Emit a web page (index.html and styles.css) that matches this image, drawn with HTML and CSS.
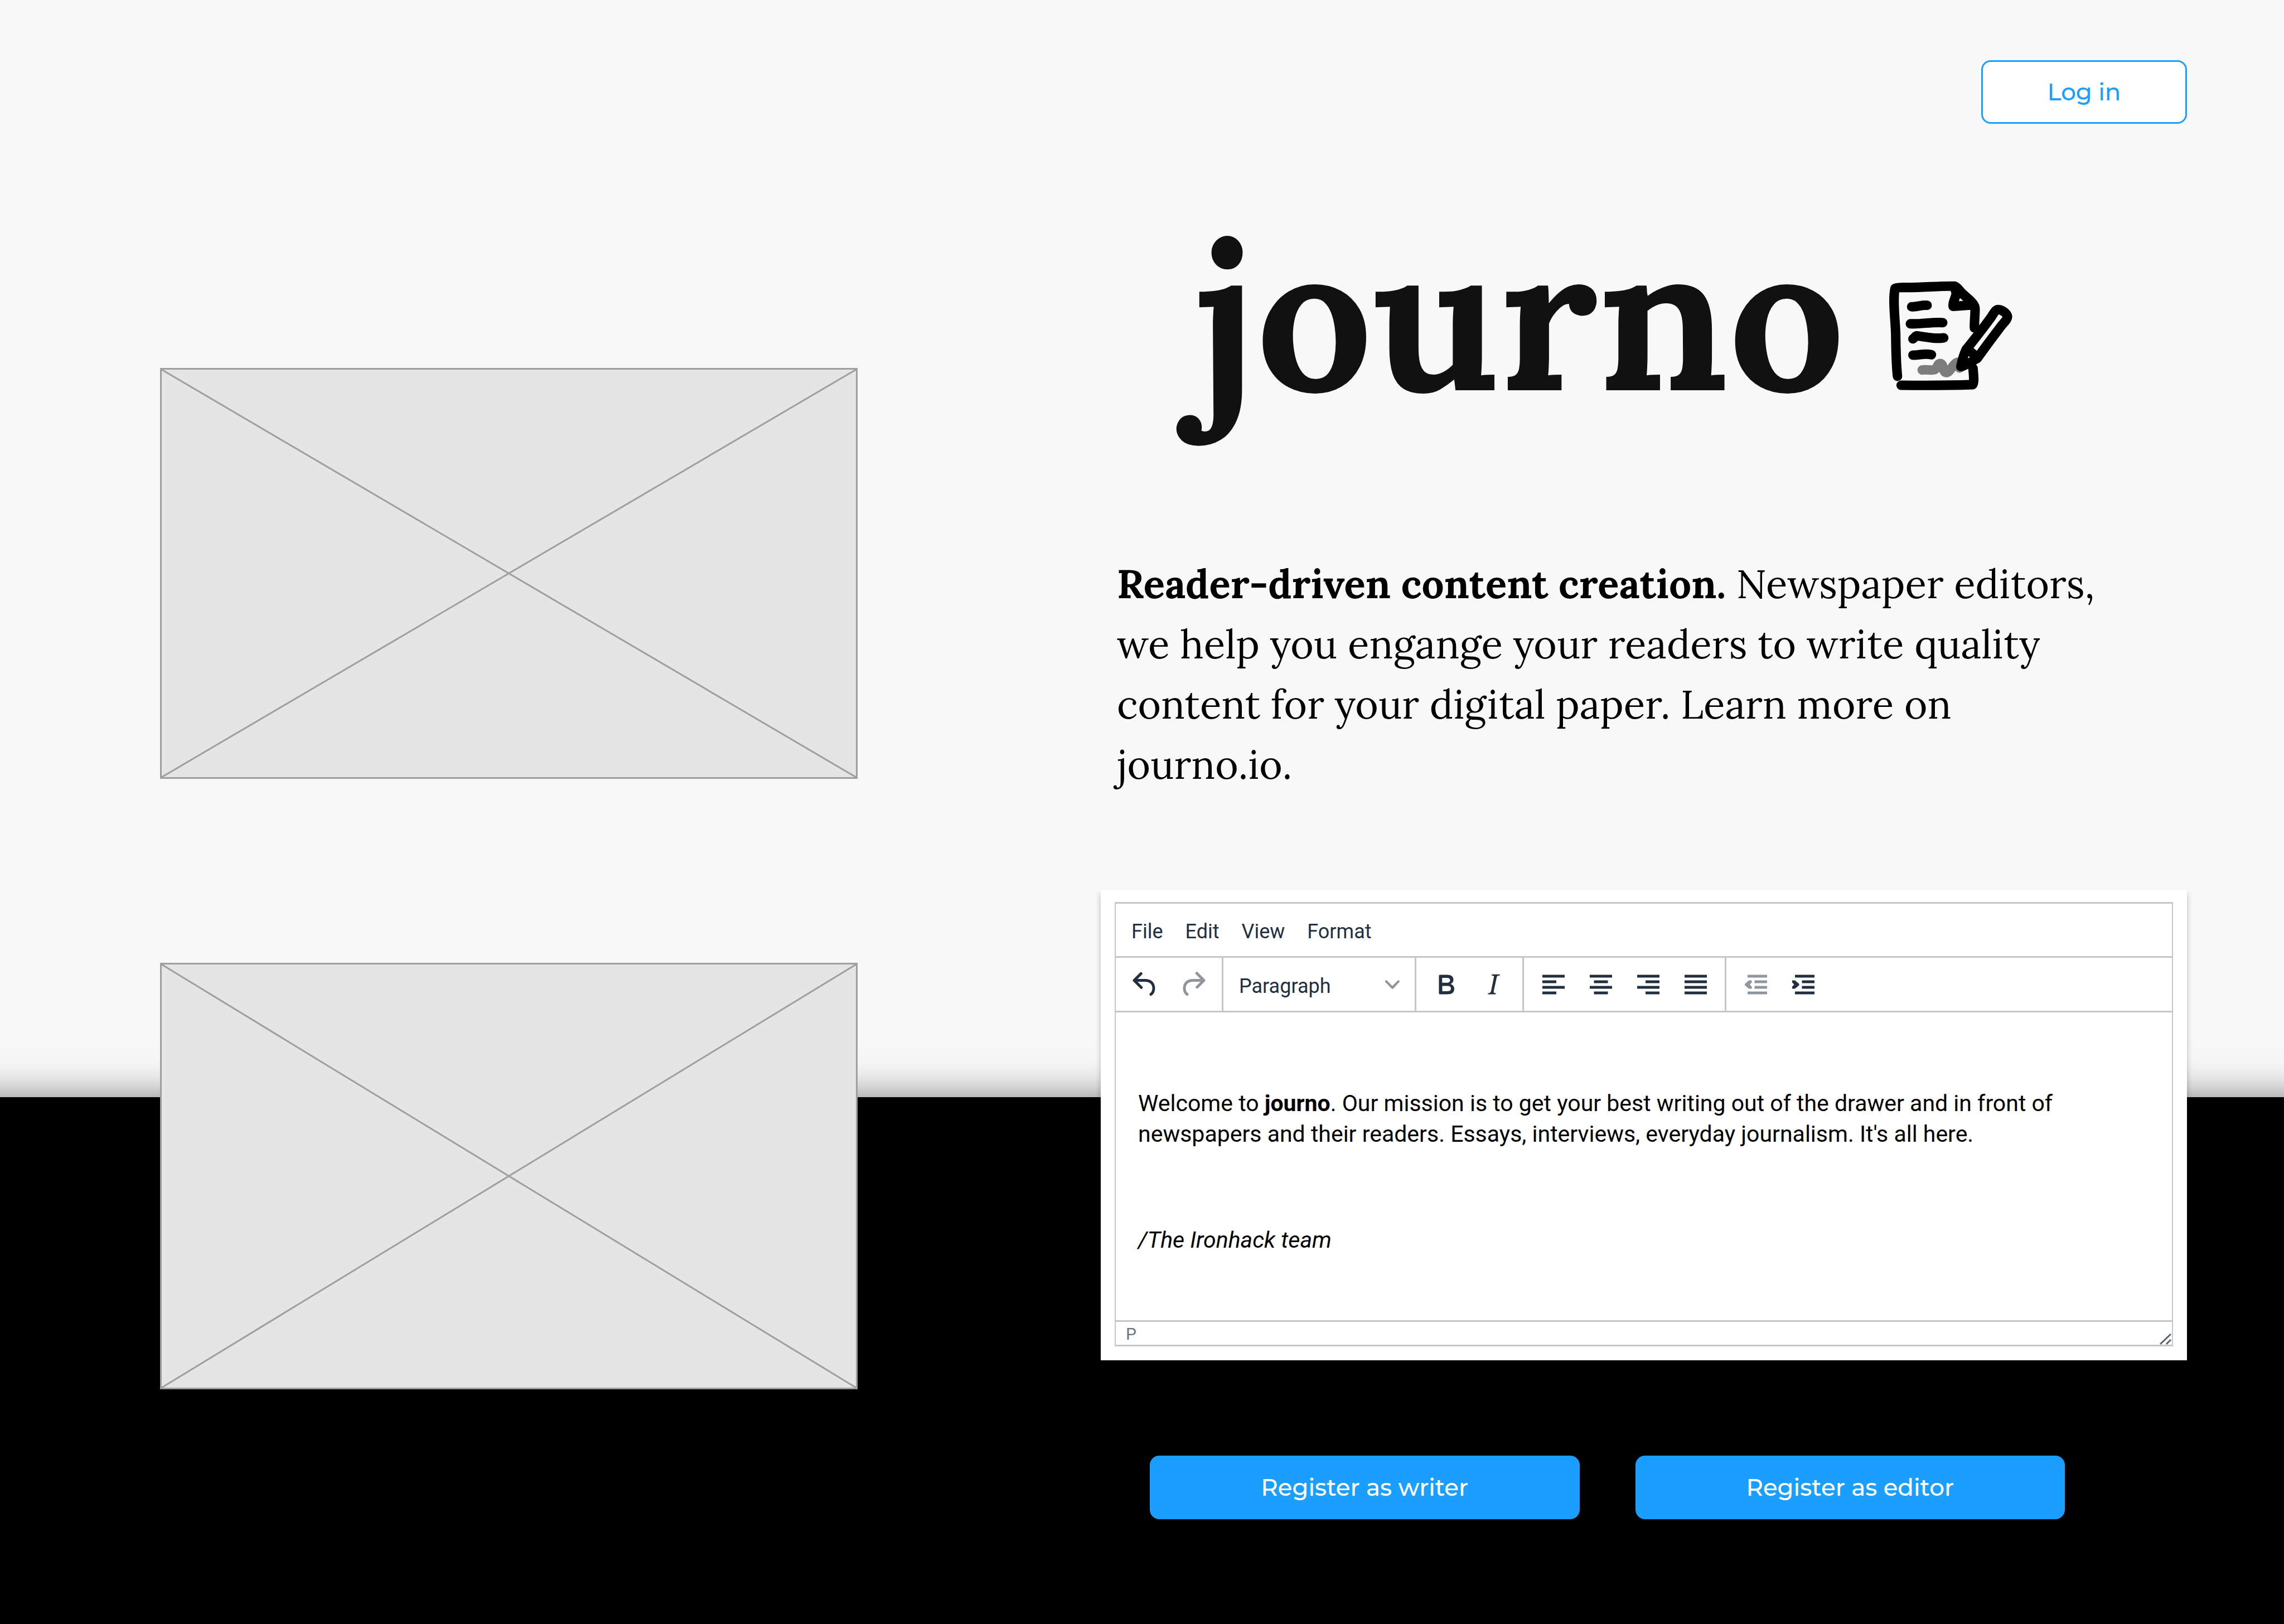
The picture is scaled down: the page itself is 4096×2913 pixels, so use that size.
FILE: index.html
```html
<!DOCTYPE html>
<html lang="en">
<head>
<meta charset="utf-8">
<title>journo</title>
<link rel="stylesheet" href="styles.css">
</head>
<body>
<div class="backdrop"></div>
<main class="page">
  <section class="gallery" aria-label="Pictures">
    <div class="placeholder placeholder-first">
      <svg viewBox="0 0 100 100" preserveAspectRatio="none"><path d="M0 0L100 100M100 0L0 100" vector-effect="non-scaling-stroke"/></svg>
    </div>
    <div class="placeholder placeholder-second">
      <svg viewBox="0 0 100 100" preserveAspectRatio="none"><path d="M0 0L100 100M100 0L0 100" vector-effect="non-scaling-stroke"/></svg>
    </div>
  </section>

  <section class="intro">
    <header class="top">
      <button class="btn btn-outline" type="button">Log in</button>
    </header>

    <div class="brand">
      <h1 class="wordmark">journo</h1>
      <svg class="brand-icon" viewBox="300 230 990 870" aria-hidden="true">
        <g fill="none" stroke-width="75" stroke-linecap="round" stroke-linejoin="round">
          <path stroke="#7d7d7d" d="M569 941C600 935 650 946 668 938C690 928 686 890 711 890C742 890 728 961 760 961C792 961 815 880 856 879L864 925"/>
          <g stroke="#000">
            <path d="M374 990C362 880 362 780 360 650C356 540 335 380 355 297C375 290 400 289 425 289C560 292 700 276 825 279C850 285 862 318 892 343C940 386 984 420 986 452C988 500 980 550 981 608"/>
            <path d="M832 318C850 350 806 400 813 438L950 428"/>
            <path d="M855 310L950 395"/>
            <path d="M486 442C530 442 570 425 608 430"/>
            <path d="M476 576C560 580 650 560 731 567"/>
            <path d="M496 695C512 684 516 671 528 671C600 680 660 698 739 687"/>
            <path d="M496 823C550 826 580 806 642 820"/>
            <path d="M403 1061C600 1064 800 1062 968 1056C982 1040 974 980 970 927"/>
            <path d="M874 914C885 860 900 810 916 780C980 700 1050 610 1112 526C1130 500 1145 464 1168 464C1195 464 1236 490 1242 518C1244 540 1215 565 1195 590C1130 675 1060 770 1004 848C970 868 920 900 879 914Z"/>
            <path d="M916 780C955 790 982 820 1004 848"/>
          </g>
        </g>
      </svg>
    </div>

    <p class="pitch"><strong>Reader-driven content creation.</strong> Newspaper editors,<br>we help you engange your readers to write quality<br>content for your digital paper. Learn more on<br>journo.io.</p>

    <div class="card">
      <div class="editor">
        <div class="menubar">
          <button type="button">File</button>
          <button type="button">Edit</button>
          <button type="button">View</button>
          <button type="button">Format</button>
        </div>
        <div class="toolbar">
          <div class="group">
            <button type="button" aria-label="Undo"><svg viewBox="0 0 24 24"><path d="M6.400 8H12c3.700 0 6.200 2 6.800 5.100.6 2.700-.4 5.600-2.300 6.800a1 1 0 0 1-1-1.800c1.100-.6 1.800-2.700 1.400-4.600-.5-2.100-2.100-3.500-4.900-3.500H6.400l3.300 3.300a1 1 0 1 1-1.400 1.400l-5-5a1 1 0 0 1 0-1.400l5-5a1 1 0 0 1 1.400 1.400L6.400 8z"/></svg></button>
            <button type="button" aria-label="Redo" disabled><svg viewBox="0 0 24 24"><path d="M17.600 10H12c-2.800 0-4.400 1.400-4.900 3.500-.4 2 .3 4 1.400 4.600a1 1 0 1 1-1 1.800c-2-1.200-2.900-4.100-2.300-6.800.6-3 3-5.100 6.800-5.100h5.600l-3.300-3.300a1 1 0 1 1 1.400-1.400l5 5a1 1 0 0 1 0 1.400l-5 5a1 1 0 0 1-1.400-1.400l3.300-3.300z"/></svg></button>
          </div>
          <label class="format-picker">
            <select aria-label="Block format"><option>Paragraph</option></select>
            <svg viewBox="0 0 10 10"><path d="M8.700 2.200c.3-.3.8-.3 1 0 .4.400.4.900 0 1.200L5.700 7.800c-.3.300-.9.300-1.200 0L.2 3.400a.8.8 0 0 1 0-1.200c.3-.3.800-.3 1.100 0L5 6l3.700-3.800z"/></svg>
          </label>
          <div class="group">
            <button type="button" aria-label="Bold"><svg viewBox="0 0 24 24"><path d="M7.800 19c-.3 0-.5 0-.6-.2l-.2-.5V5.700c0-.2 0-.4.200-.5l.6-.2h5c1.500 0 2.700.3 3.500 1 .7.600 1.100 1.400 1.100 2.500a3 3 0 0 1-.6 1.900c-.4.600-1 1-1.600 1.200.4.100.9.300 1.300.6s.8.700 1 1.200c.4.400.5 1 .5 1.600 0 1.300-.4 2.300-1.300 3-.8.700-2.100 1-3.800 1H7.800zm5-8.300c.6 0 1.200-.1 1.600-.5.4-.3.600-.7.600-1.300 0-1.100-.8-1.700-2.300-1.700H9.300v3.500h3.400zm.5 6c.7 0 1.300-.1 1.700-.4.4-.4.600-.9.600-1.500s-.2-1-.7-1.400c-.4-.3-1-.4-2-.4H9.400v3.800h4z"/></svg></button>
            <button type="button" aria-label="Italic"><svg viewBox="0 0 24 24"><path d="M16.700 4.700l-.1.900h-.3c-.6 0-1 0-1.400.3-.3.300-.4.600-.5 1.100l-2.100 9.800v.6c0 .5.400.8 1.400.8h.2l-.2.800H8l.2-.8h.2c1.100 0 1.800-.5 2-1.500l2-9.800.1-.5c0-.6-.4-.8-1.400-.8h-.3l.2-.9h5.800z"/></svg></button>
          </div>
          <div class="group">
            <button type="button" aria-label="Align left"><svg viewBox="0 0 24 24"><path d="M4 5h16v2H4zM4 9h10v2H4zM4 13h16v2H4zM4 17h10v2H4z"/></svg></button>
            <button type="button" aria-label="Align center"><svg viewBox="0 0 24 24"><path d="M4 5h16v2H4zM7 9h10v2H7zM4 13h16v2H4zM7 17h10v2H7z"/></svg></button>
            <button type="button" aria-label="Align right"><svg viewBox="0 0 24 24"><path d="M4 5h16v2H4zM10 9h10v2H10zM4 13h16v2H4zM10 17h10v2H10z"/></svg></button>
            <button type="button" aria-label="Justify"><svg viewBox="0 0 24 24"><path d="M4 5h16v2H4zM4 9h16v2H4zM4 13h16v2H4zM4 17h16v2H4z"/></svg></button>
          </div>
          <div class="group group-last">
            <button type="button" aria-label="Decrease indent" disabled><svg viewBox="0 0 24 24"><path d="M6 5h14v2H6zM11 9h9v2h-9zM11 13h9v2h-9zM6 17h14v2H6zM7 9h2v1.500L7.600 12 9 13.500V15H7l-3-2.500v-1z"/></svg></button>
            <button type="button" aria-label="Increase indent"><svg viewBox="0 0 24 24"><path d="M6 5h14v2H6zM11 9h9v2h-9zM11 13h9v2h-9zM6 17h14v2H6zM6 9H4v1.500L5.400 12 4 13.500V15h2l3-2.500v-1z"/></svg></button>
          </div>
        </div>
        <div class="document">
          <p><br></p>
          <p>Welcome to <strong>journo</strong>. Our mission is to get your best writing out of the drawer and in front of<br>newspapers and their readers. Essays, interviews, everyday journalism. It's all here.</p>
          <p><br></p>
          <p><em>/The Ironhack team</em></p>
        </div>
        <div class="statusbar">
          <span>P</span>
          <svg class="resize" viewBox="0 0 22 20"><path d="M1 19L20 1M12 19L20 11"/></svg>
        </div>
      </div>
    </div>

    <div class="actions">
      <button class="btn btn-solid" type="button">Register as writer</button>
      <button class="btn btn-solid" type="button">Register as editor</button>
    </div>
  </section>
</main>
</body>
</html>
```
FILE: styles.css
```css
* {
  box-sizing: border-box;
}

body {
  margin: 0;
  position: relative;
  min-height: 100vh;
  background: #f8f8f8;
  color: #000;
  font-family: Lora, "Liberation Serif", serif;
  overflow-x: hidden;
}

button,
select {
  margin: 0;
  padding: 0;
  border: 0;
  background: none;
  color: inherit;
  font: inherit;
}

p {
  margin: 0;
}

/* Black lower part of the page, behind the content */
.backdrop {
  position: absolute;
  top: 1968px;
  right: -100px;
  bottom: 0;
  left: -100px;
  background: #000;
  box-shadow: 0 0 64px rgba(0, 0, 0, 0.5);
}

.page {
  position: relative;
  display: grid;
  grid-template-columns: 1251fr 1948fr;
  column-gap: 436px;
  padding: 0 174px 188px 287px;
}

/* Picture placeholders */
.gallery {
  display: flex;
  flex-direction: column;
  gap: 330px;
  padding-top: 660px;
}

.placeholder {
  border: 3px solid #9f9f9f;
  background: #e5e5e5;
}

.placeholder-first {
  height: 737px;
}

.placeholder-second {
  height: 765px;
}

.placeholder svg {
  display: block;
  width: 100%;
  height: 100%;
  fill: none;
  stroke: #9f9f9f;
  stroke-width: 3px;
}

/* Buttons */
.btn {
  height: 114px;
  border-radius: 17px;
  font: 500 42px/52px Montserrat, Inter, sans-serif;
}

.btn-outline {
  width: 369px;
  border: 3px solid #1a9fff;
  background: #fff;
  color: #1a9fff;
}

.btn-solid {
  flex: 1;
  background: #1a9fff;
  color: #fff;
}

.top {
  display: flex;
  justify-content: flex-end;
  padding-top: 108px;
}

/* Brand */
.brand {
  display: flex;
  align-items: baseline;
  gap: 77px;
  margin-top: 144px;
  padding-left: 168px;
}

.wordmark {
  margin: 0;
  color: #111;
  font-size: 368px;
  line-height: 400px;
}

.brand-icon {
  width: 225px;
  height: 198px;
}

.pitch {
  margin-top: 227px;
  padding-left: 29px;
  font-size: 71px;
  line-height: 108px;
}

/* Editor */
.card {
  margin-top: 171px;
  padding: 22px 25px 25px;
  background: #fff;
  box-shadow: 0 7px 10px rgba(0, 0, 0, 0.25);
}

.editor {
  border: 3px solid #c6c6c6;
  border-width: 3px 2px;
  color: #222f3e;
  font-family: Roboto, sans-serif;
  font-size: 36px;
  line-height: 42px;
}

.menubar {
  display: flex;
  gap: 20px;
  padding: 6px 18px 0;
  height: 97px;
  border-bottom: 3px solid #c6c6c6;
}

.menubar button {
  padding: 0 10px;
}

.toolbar {
  display: flex;
  height: 98px;
  border-bottom: 3px solid #c6c6c6;
}

.group {
  display: flex;
  padding: 0 10px;
  border-right: 3px solid #c6c6c6;
}

.group-last {
  border-right: 0;
}

.group button {
  display: flex;
  align-items: center;
  justify-content: center;
  width: 85px;
}

.group svg {
  width: 60px;
  height: 60px;
  fill: #222f3e;
}

.group button:disabled svg {
  fill: #90969d;
}

.format-picker {
  display: grid;
  grid-template-columns: 1fr 26px;
  align-items: center;
  width: 346px;
  padding-right: 27px;
  border-right: 3px solid #c6c6c6;
}

.format-picker select {
  grid-area: 1 / 1 / 2 / 3;
  align-self: stretch;
  appearance: none;
  padding: 6px 0 0 28px;
}

.format-picker svg {
  grid-area: 1 / 2;
  width: 26px;
  height: 26px;
  fill: #90969d;
  pointer-events: none;
}

.document {
  display: flex;
  flex-direction: column;
  gap: 40px;
  min-height: 552px;
  padding: 41px 40px;
  color: #000;
  font-size: 41px;
  line-height: 55px;
}

.statusbar {
  display: flex;
  align-items: flex-end;
  justify-content: space-between;
  height: 44px;
  padding-left: 18px;
  border-top: 3px solid #c6c6c6;
  color: #6b7480;
  font-size: 30px;
  line-height: 38px;
}

.resize {
  width: 22px;
  height: 20px;
  fill: none;
  stroke: #5a6470;
  stroke-width: 3px;
}

.actions {
  display: flex;
  gap: 100px;
  margin-top: 171px;
  padding: 0 219px 0 88px;
}
```
